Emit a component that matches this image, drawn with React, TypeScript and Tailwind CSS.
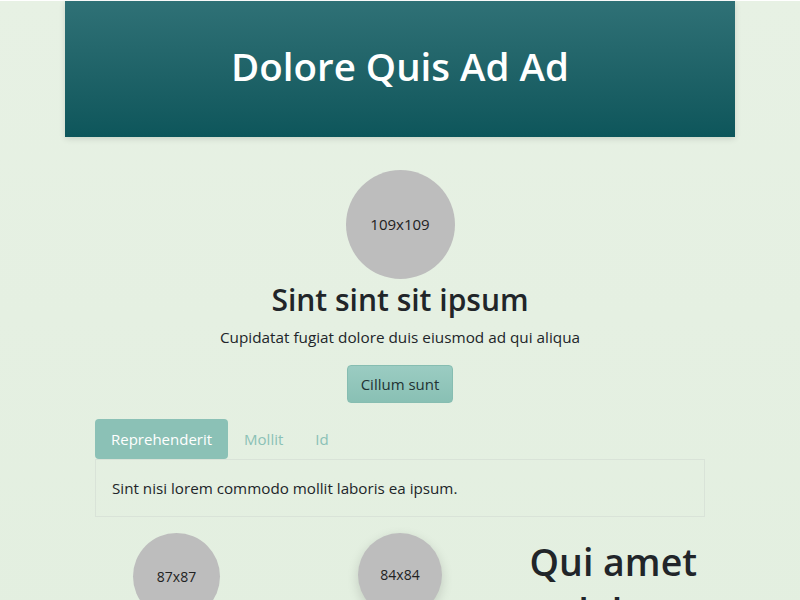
export default function App() {
  return (
    <div className="min-h-[600px] bg-gradient-to-b from-[#e7f1e4] to-[#e3efe0] font-['Open_Sans',sans-serif] text-[#212529]">
      <header className="mx-auto mt-px flex h-[136px] w-[670px] items-center justify-center bg-gradient-to-b from-[#2f7176] to-[#0d565b] pb-[4px] shadow-[0_2px_6px_rgba(0,0,0,0.12)]">
        <h1 className="text-[38.5px] font-semibold text-white">Dolore Quis Ad Ad</h1>
      </header>

      <section className="mx-auto flex w-[610px] flex-col items-center pt-[33px]">
        <div className="flex h-[109px] w-[109px] items-center justify-center rounded-full bg-[#bdbdbd] text-[15px] text-[#222]">
          109x109
        </div>
        <h2 className="mt-[1px] text-[30px] leading-[40px] font-semibold">Sint sint sit ipsum</h2>
        <p className="mt-[6px] text-[15.3px]">Cupidatat fugiat dolore duis eiusmod ad qui aliqua</p>
        <button className="mt-[16px] h-[38px] rounded-[4px] border border-[#86bdb1] bg-gradient-to-b from-[#9bccc2] to-[#89c0b4] px-[13px] text-[15px] text-[#233]">
          Cillum sunt
        </button>
      </section>

      <section className="mx-auto mt-[16px] w-[610px]">
        <nav className="flex h-[40px] items-stretch text-[15px]">
          <span className="flex items-center rounded-[4px] bg-[#8bc1b6] px-[16px] text-white">Reprehenderit</span>
          <span className="flex items-center px-[16px] text-[#8bc1b6]">Mollit</span>
          <span className="flex items-center px-[16px] text-[#8bc1b6]">Id</span>
        </nav>
        <div className="flex h-[58px] items-center border border-[#d9e3d8] px-[16px] text-[15.2px]">
          Sint nisi lorem commodo mollit laboris ea ipsum.
        </div>
      </section>

      <section className="mx-auto mt-[16px] grid w-[640px] grid-cols-3">
        <div className="px-[15px]">
          <div className="ml-[38px] flex h-[87px] w-[87px] items-center justify-center rounded-full bg-[#bdbdbd] text-[14px] text-[#222]">
            87x87
          </div>
        </div>
        <div className="flex justify-center px-[15px]">
          <div className="flex h-[84px] w-[84px] items-center justify-center rounded-full bg-[#bdbdbd] text-[14px] text-[#222] shadow-[0_4px_12px_rgba(0,0,0,0.15)]">
            84x84
          </div>
        </div>
        <div className="px-[15px] text-center">
          <h3 className="mt-[4px] text-[37.5px] leading-[50px] font-semibold">Qui amet dolor</h3>
        </div>
      </section>
    </div>
  );
}
